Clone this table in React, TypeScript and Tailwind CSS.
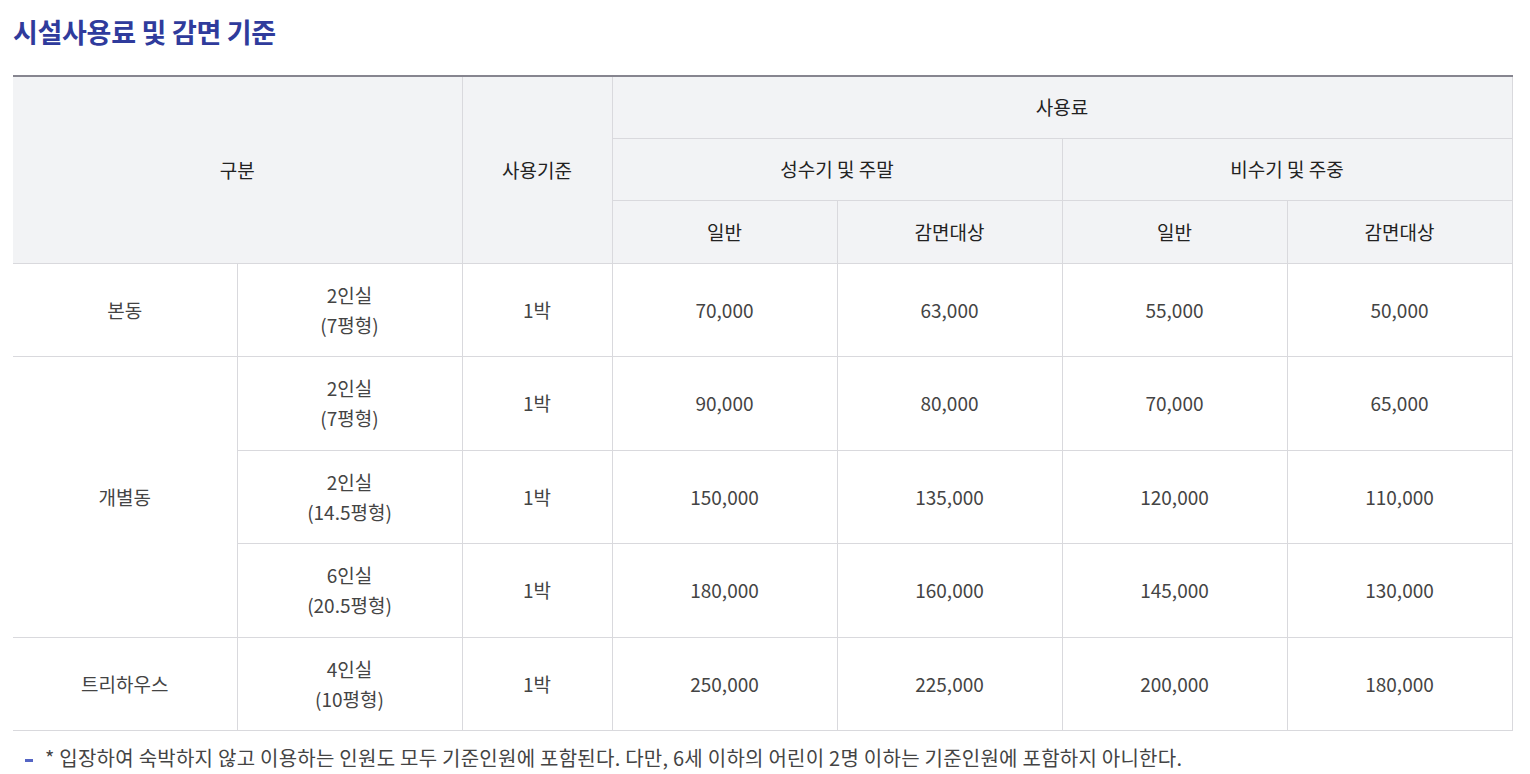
import React from 'react';

type Row = {
  building?: { name: string; span: number };
  room: string;
  size: string;
  prices: string[];
};

const rows: Row[] = [
  { building: { name: '본동', span: 1 }, room: '2인실', size: '(7평형)', prices: ['70,000', '63,000', '55,000', '50,000'] },
  { building: { name: '개별동', span: 3 }, room: '2인실', size: '(7평형)', prices: ['90,000', '80,000', '70,000', '65,000'] },
  { room: '2인실', size: '(14.5평형)', prices: ['150,000', '135,000', '120,000', '110,000'] },
  { room: '6인실', size: '(20.5평형)', prices: ['180,000', '160,000', '145,000', '130,000'] },
  { building: { name: '트리하우스', span: 1 }, room: '4인실', size: '(10평형)', prices: ['250,000', '225,000', '200,000', '180,000'] },
];

const th = 'border-r border-b border-[#d9d9dd] bg-[#f2f3f5] font-normal text-[#222] text-center align-middle';
const td = 'border-r border-b border-[#d9d9dd] text-[#444] text-center align-middle';

export default function App() {
  return (
    <div className="w-[1530px] min-h-[774px] bg-white px-[13px] pt-[13px] font-['Noto_Sans_CJK_KR','Noto_Sans',sans-serif]">
      <h2 className="text-[27px] leading-[38px] font-bold text-[#2f3b9c] tracking-[-0.3px]">시설사용료 및 감면 기준</h2>

      <table className="mt-[24px] w-[1499px] table-fixed border-collapse border-t-2 border-t-[#86858f] text-[19px] leading-[30px]">
        <colgroup>
          <col className="w-[224px]" />
          <col className="w-[225px]" />
          <col className="w-[150px]" />
          <col className="w-[225px]" />
          <col className="w-[225px]" />
          <col className="w-[225px]" />
          <col className="w-[225px]" />
        </colgroup>
        <thead>
          <tr className="h-[62px]">
            <th rowSpan={3} colSpan={2} className={th}>구분</th>
            <th rowSpan={3} className={th}>사용기준</th>
            <th colSpan={4} className={th}>사용료</th>
          </tr>
          <tr className="h-[62px]">
            <th colSpan={2} className={th}>성수기 및 주말</th>
            <th colSpan={2} className={th}>비수기 및 주중</th>
          </tr>
          <tr className="h-[63px]">
            <th className={th}>일반</th>
            <th className={th}>감면대상</th>
            <th className={th}>일반</th>
            <th className={th}>감면대상</th>
          </tr>
        </thead>
        <tbody>
          {rows.map((r, i) => (
            <tr key={i} className="h-[93.5px]">
              {r.building && (
                <td rowSpan={r.building.span} className={td}>{r.building.name}</td>
              )}
              <td className={td}>
                {r.room}
                <br />
                {r.size}
              </td>
              <td className={td}>1박</td>
              {r.prices.map((p, j) => (
                <td key={j} className={td}>{p}</td>
              ))}
            </tr>
          ))}
        </tbody>
      </table>

      <p className="mt-[12px] pl-[12px] text-[20px] leading-[30px] tracking-[0.25px] text-[#444] flex items-center">
        <span className="inline-block w-[8px] h-[3px] bg-[#5565c4] mr-[12px] mt-[4px]" />
        * 입장하여 숙박하지 않고 이용하는 인원도 모두 기준인원에 포함된다. 다만, 6세 이하의 어린이 2명 이하는 기준인원에 포함하지 아니한다.
      </p>
    </div>
  );
}
